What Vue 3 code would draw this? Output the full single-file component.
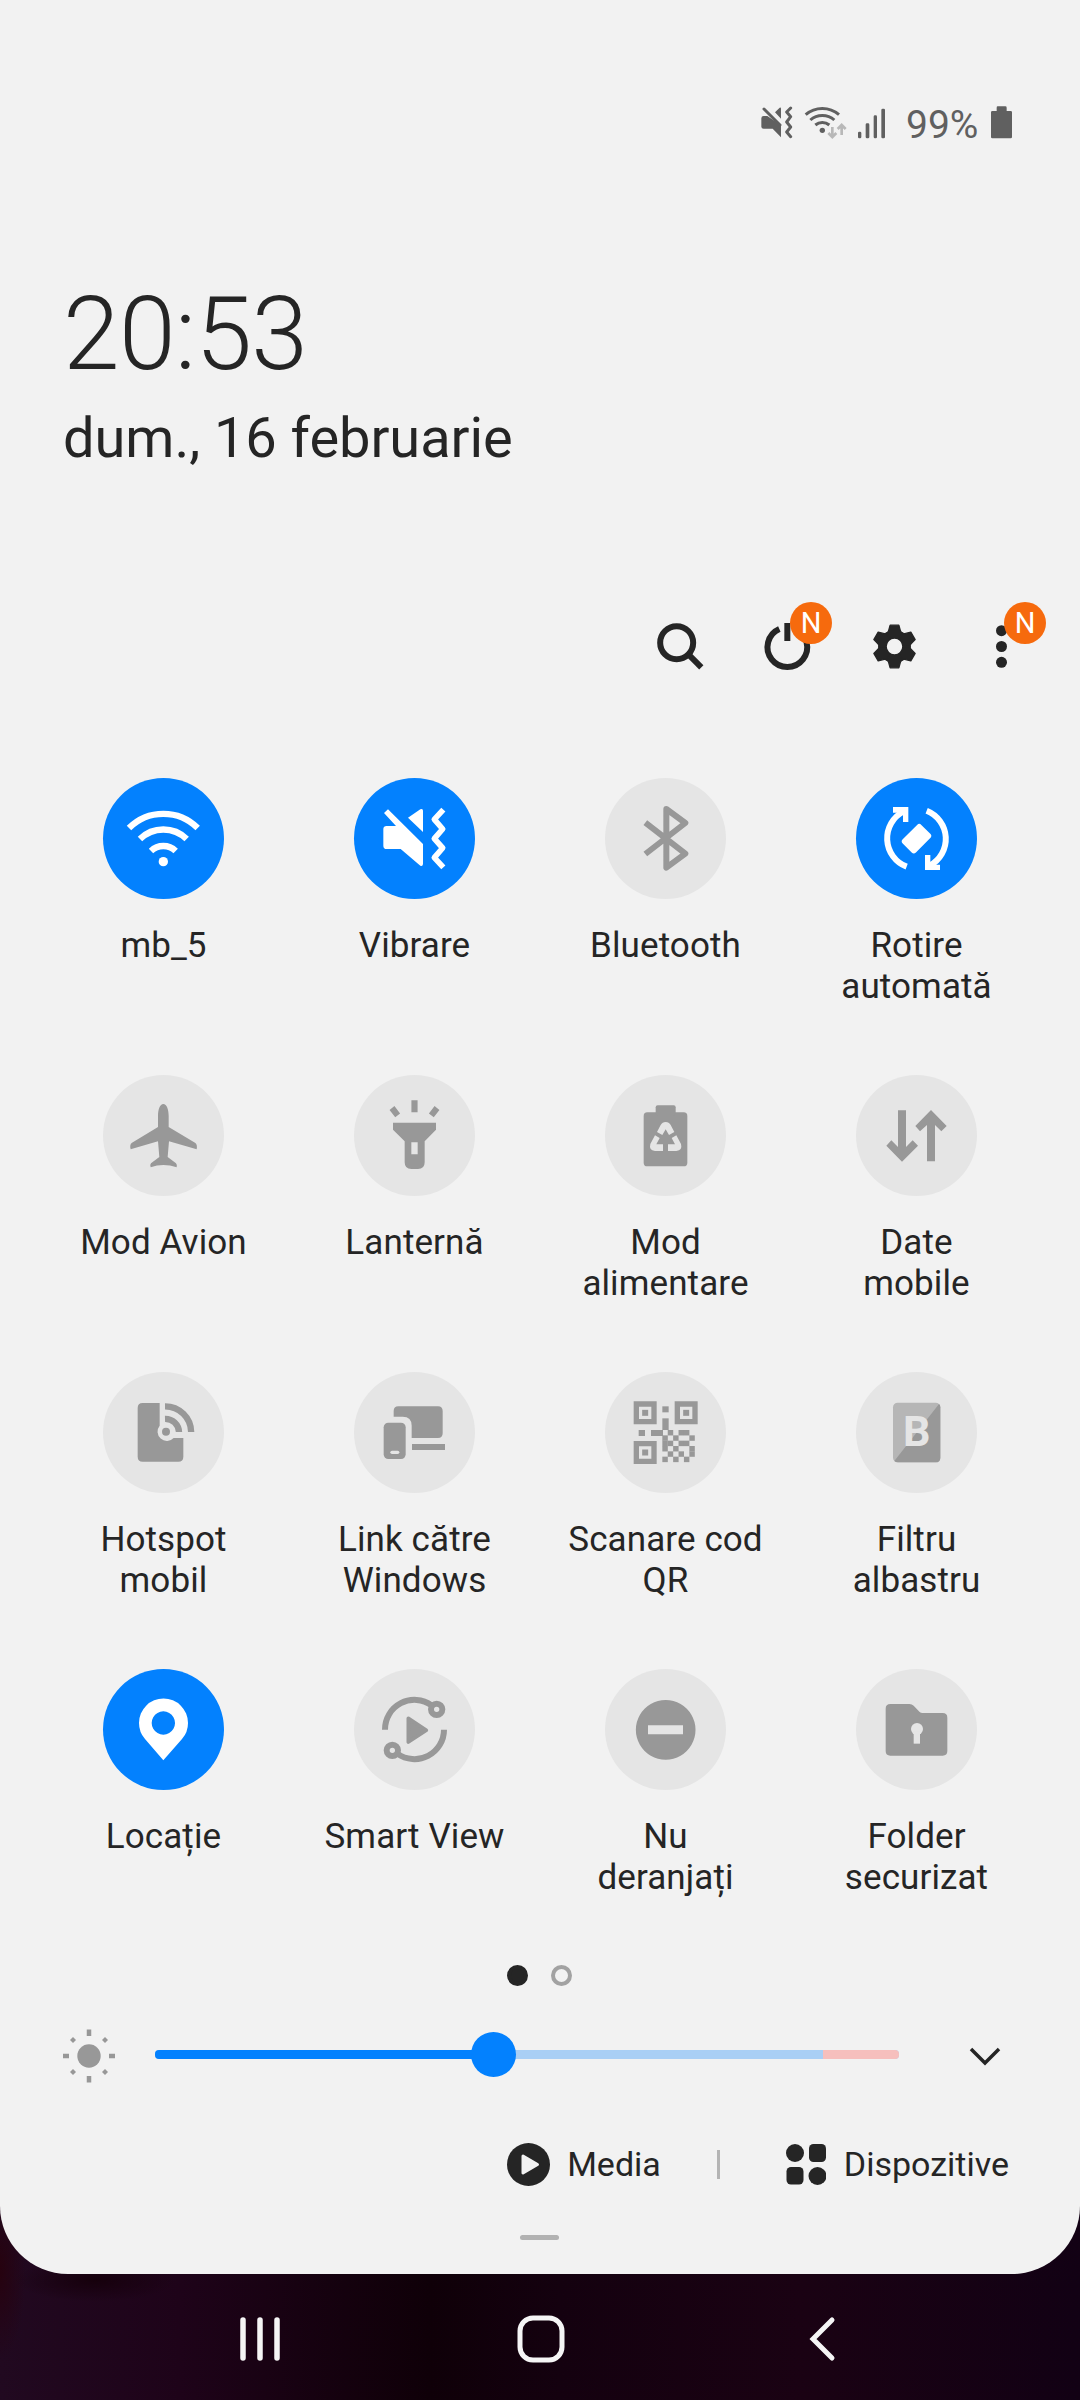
<template>
  <div class="screen">
    <main class="panel">
      <!-- status bar -->
      <div class="status-bar">
        <svg class="status-vibrate" viewBox="60 36 102 135">
          <path d="M64 85q0-7 7-7H82L123 106V142L98 116H71q-7 0-7-6zM105 67L119 53q4-2 4 3V86z" fill="currentColor" />
          <path d="M72 57L120 105M152 54L140 66L152 80L140 96L152 111L140 126L152 140" fill="none" stroke="currentColor" stroke-width="9" stroke-linecap="round" stroke-linejoin="round" />
        </svg>
        <svg class="status-wifi" viewBox="192 36 129 135">
          <g fill="none" stroke="currentColor" stroke-width="9">
            <path d="M197 74A76 76 0 0 1 297 74M211 90A54 54 0 0 1 283 90M226 105A33 33 0 0 1 268 105" />
            <path d="M277 111V139M265 129L277 141L289 129M305 135V106M293 117L305 105L317 117" stroke="#b8b8b8" stroke-width="8" />
          </g>
          <circle cx="247" cy="121" r="8" fill="currentColor" />
        </svg>
        <svg class="status-signal" viewBox="351 36 87 135" fill="currentColor">
          <rect x="354" y="125" width="10" height="20" rx="4" />
          <rect x="377" y="100" width="11" height="45" rx="4" />
          <rect x="401" y="76" width="10" height="69" rx="4" />
          <rect x="424" y="56" width="11" height="89" rx="4" />
        </svg>
        <span class="battery-text">99%</span>
        <svg class="status-battery" viewBox="750 36 69 135" fill="currentColor">
          <path d="M773 49H796q4 0 4 4V63H812q4 0 4 4V141q0 4-4 4H757q-4 0-4-4V67q0-4 4-4H770V53q0-4 3-4z" />
        </svg>
      </div>

      <div class="clock">20:53</div>
      <div class="date">dum., 16 februarie</div>

      <!-- header actions -->
      <div class="actions">
        <button class="action">
          <svg viewBox="0 0 321 321" fill="none" stroke="currentColor" stroke-width="18">
            <circle cx="149" cy="149" r="49.5" />
            <path d="M185 185L223 223" />
          </svg>
        </button>
        <button class="action">
          <svg viewBox="0 0 321 321" fill="none" stroke="currentColor" stroke-width="18">
            <path d="M136 108A59.500 59.500 0 1 0 184 108M160 90V144" />
          </svg>
          <span class="badge">N</span>
        </button>
        <button class="action">
          <svg viewBox="0 0 321 321">
            <g transform="translate(160.500 160.500)" fill="currentColor" stroke="currentColor" stroke-width="4" stroke-linejoin="round">
              <path v-for="n in 6" :key="n" :transform="`rotate(${n * 60})`" d="M-13-64H13L18-46Q20-42 24-40L0 0L-24-40Q-20-42-18-46z" />
              <circle r="21" fill="#f2f2f2" stroke="#f2f2f2" />
            </g>
          </svg>
        </button>
        <button class="action">
          <svg viewBox="0 0 321 321" fill="currentColor">
            <circle cx="160.500" cy="113" r="16.500" />
            <circle cx="160.500" cy="160.500" r="16.500" />
            <circle cx="160.500" cy="208" r="16.500" />
          </svg>
          <span class="badge">N</span>
        </button>
      </div>

      <!-- quick settings -->
      <div class="tiles">
        <div v-for="tile in tiles" :key="tile.key" class="tile" :class="{ active: tile.on }" @click="toggle(tile)">
          <div class="tile-icon">
            <svg viewBox="0 0 363 363" fill="currentColor" v-html="tile.icon"></svg>
          </div>
          <div class="tile-label">{{ tile.label }}</div>
        </div>
      </div>

      <div class="pager">
        <span v-for="n in 2" :key="n" class="dot" :class="{ current: n === page }" @click="page = n"></span>
      </div>

      <!-- brightness -->
      <div class="brightness">
        <svg class="sun" viewBox="-27 -27 54 54">
          <circle r="11.700" fill="currentColor" />
          <path d="M0-26.500V-20M0 20V26.500M-26-0H-20M20 0H26" stroke="currentColor" stroke-width="4.500" />
          <path v-for="n in 4" :key="n" :transform="`rotate(${n * 90})`" d="M16-19L19-16L16-13L13-16z" fill="currentColor" />
        </svg>
        <div class="slider">
          <div class="slider-warn"></div>
          <div class="slider-fill" :style="{ width: brightness + '%' }"></div>
          <div class="slider-thumb" :style="{ left: brightness + '%' }"></div>
        </div>
        <svg class="chevron" viewBox="0 0 32 22">
          <path d="M2 3L16 17L30 3" fill="none" stroke="currentColor" stroke-width="3.500" />
        </svg>
      </div>

      <div class="shortcuts">
        <div class="shortcut">
          <svg class="media-icon" viewBox="0 0 43 43">
            <circle cx="21.500" cy="21.500" r="21.500" fill="currentColor" />
            <path d="M16 13L30.500 21.500L16 30z" fill="#f2f2f2" stroke="#f2f2f2" stroke-width="3" stroke-linejoin="round" />
          </svg>
          <span>Media</span>
        </div>
        <span class="divider"></span>
        <div class="shortcut">
          <svg class="devices-icon" viewBox="0 0 40 41" fill="currentColor">
            <circle cx="9" cy="9" r="9" />
            <rect x="23" y="0" width="17" height="18" rx="4.500" />
            <rect x="0.500" y="23" width="17" height="17.500" rx="4.500" />
            <circle cx="31.500" cy="32" r="9" />
          </svg>
          <span>Dispozitive</span>
        </div>
      </div>

      <div class="handle"></div>
    </main>

    <nav class="nav-bar">
      <svg viewBox="0 0 48 48" stroke="currentColor" stroke-width="5.500" stroke-linecap="round">
        <path d="M7 5V43M24 5V43M41 5V43" />
      </svg>
      <svg viewBox="0 0 48 48" fill="none" stroke="currentColor" stroke-width="5">
        <rect x="3" y="3" width="42" height="42" rx="13" />
      </svg>
      <svg viewBox="0 0 48 48" fill="none" stroke="currentColor" stroke-width="5" stroke-linecap="round">
        <path d="M34 5L15 24L34 43" />
      </svg>
    </nav>
  </div>
</template>

<script setup>
import { ref } from 'vue'

const page = ref(1)
const brightness = ref(45.5)

// QR modules, 1 = dark
const qrRows = ['010110', '101001', '110110', '101001', '010101', '101010']
const qrCells = qrRows
  .map((row, y) =>
    [...row]
      .map((c, x) => (c === '1' ? `<rect x="${172 + x * 16.2}" y="${174 + y * 16}" width="16.4" height="16.4"/>` : ''))
      .join('')
  )
  .join('')
const finder = (x, y) =>
  `<path d="M${x} ${y}h69v69h-69zM${x + 16} ${y + 16}v37h37v-37z"/><rect x="${x + 25.5}" y="${y + 25.5}" width="18" height="18"/>`

const icons = {
  wifi: `<g fill="none" stroke="currentColor" stroke-width="19"><path d="M78 150A146 146 0 0 1 284 150M111 183A100 100 0 0 1 251 183M144 219A53 53 0 0 1 218 219"/></g><circle cx="181" cy="251" r="14"/>`,
  vibrate: `<path d="M90 105L102 94L207 198V258q-1 8-8 5L140 213H98q-10 0-10-10V153q0-9 10-9H126zM162 119L199 94q8-3 8 4V162z"/><path d="M268 95L241 124L266 153L241 182L266 210L241 239L268 268" fill="none" stroke="currentColor" stroke-width="17" stroke-linejoin="round"/>`,
  bluetooth: `<path d="M121 134L241 227L184 269V93L241 135L121 228" fill="none" stroke="currentColor" stroke-width="18" stroke-linejoin="round"/>`,
  rotate: `<g fill="none" stroke="currentColor" stroke-width="18"><path d="M152 266A91 91 0 0 1 143 100M212 98A91 91 0 0 1 221 263"/></g><path d="M111 87H157V132H141V104H111zM207 231H223V260H252V276H207z"/><rect x="142" y="154" width="79" height="56" rx="9" transform="rotate(-45 181.5 182)"/>`,
  plane: `<path d="M181 87C191 87 197 104 197 122V156L276 203Q284 208 281 223L198 199L194 246L219 265Q223 270 221 277Q201 270 181 270Q162 270 143 277Q140 270 144 265L169 246L165 199L83 223Q79 208 87 203L165 156V122C165 104 171 87 181 87z"/>`,
  torch: `<path fill-rule="evenodd" d="M117 143H246V164L212 199V262q0 20-20 20H172q-20 0-20-20V199L117 164zM172 202V238H191V202z"/><path d="M181.500 76V112M114 99L131 121M249 99L232 121" fill="none" stroke="currentColor" stroke-width="18.500"/>`,
  battery: `<rect x="116" y="112" width="131" height="162" rx="11"/><rect x="152" y="91" width="60" height="30" rx="6"/><g fill="#e5e5e5"><path d="M156 171L167 150Q172 141 182 141Q192 141 197 150L208 171L192 180L182 163L172 180z"/><path d="M150 181L164 189L154 208H174V228H150Q131 226 136 207z"/><path d="M214 181L200 189L210 208H189V228H214Q233 226 228 207z"/></g>`,
  data: `<path d="M126 106H150V216L170 196L186 212L138 260L91 212L106 196L126 216zM213 259H237V150L256 169L272 153L225 105L178 153L192 169L213 150z"/>`,
  hotspot: `<path d="M119 93H170V161A28 28 0 0 0 212 198H241V254q0 15-15 15H119q-15 0-15-15V108q0-15 15-15z"/><circle cx="189" cy="179" r="12"/><path d="M186 140.500A41 41 0 0 1 228 180M186 103A78 78 0 0 1 264.500 180" fill="none" stroke="currentColor" stroke-width="19"/>`,
  link: `<path d="M119 134V117q0-14 14-14H252q14 0 14 14V184q0 14-14 14H173V161q0-27-27-27z"/><rect x="89" y="152" width="66" height="109" rx="14"/><rect x="109" y="236" width="27" height="10" rx="5" fill="#e5e5e5"/><rect x="174" y="216" width="99" height="18"/>`,
  qr: `${finder(86, 88)}${finder(209, 88)}${finder(86, 207)}<rect x="172" y="103" width="19" height="18"/><rect x="172" y="139" width="19" height="35"/><rect x="101" y="174" width="19" height="18"/><rect x="138" y="174" width="36" height="18"/>${qrCells}`,
  blueFilter: `<rect x="111" y="92" width="142" height="179" rx="14" fill="#b6b6b6"/><path d="M249 96Q253 99 253 106V257q0 14-14 14H125Q119 271 115 267z"/><text x="182" y="222" text-anchor="middle" font-family="Roboto, sans-serif" font-size="129" font-weight="700" fill="#e5e5e5">B</text>`,
  location: `<path fill-rule="evenodd" d="M181 274L126 210Q108 190 108 162A73 73 0 0 1 255 162Q255 190 237 210zM181 127a35 35 0 1 0 .1 0z"/>`,
  smartView: `<g fill="none" stroke="currentColor" stroke-width="18"><path d="M93 182A88.500 88.500 0 0 1 233 109M270 182A88.500 88.500 0 0 1 130 254"/><circle cx="248" cy="121" r="17"/><circle cx="115" cy="244" r="17"/></g><path d="M163 148L217 183.500L163 219z" stroke="currentColor" stroke-width="11" stroke-linejoin="round"/>`,
  dnd: `<path fill-rule="evenodd" d="M182 93a89.500 89.500 0 1 0 .1 0zM129 169H234V196H129z"/>`,
  folder: `<path d="M103 105H160q8 0 13 5L191 129q3 3 9 3H260q14 0 14 14V246q0 14-14 14H103q-14 0-14-14V119q0-14 14-14z"/><g fill="#e5e5e5"><circle cx="183" cy="180" r="18"/><rect x="173" y="188" width="19" height="36"/></g>`,
}

const tiles = ref([
  { key: 'wifi', label: 'mb_5', on: true, icon: icons.wifi },
  { key: 'vibrate', label: 'Vibrare', on: true, icon: icons.vibrate },
  { key: 'bluetooth', label: 'Bluetooth', on: false, icon: icons.bluetooth },
  { key: 'rotate', label: 'Rotire\nautomată', on: true, icon: icons.rotate },
  { key: 'plane', label: 'Mod Avion', on: false, icon: icons.plane },
  { key: 'torch', label: 'Lanternă', on: false, icon: icons.torch },
  { key: 'battery', label: 'Mod\nalimentare', on: false, icon: icons.battery },
  { key: 'data', label: 'Date\nmobile', on: false, icon: icons.data },
  { key: 'hotspot', label: 'Hotspot\nmobil', on: false, icon: icons.hotspot },
  { key: 'link', label: 'Link către\nWindows', on: false, icon: icons.link },
  { key: 'qr', label: 'Scanare cod\nQR', on: false, icon: icons.qr },
  { key: 'blueFilter', label: 'Filtru\nalbastru', on: false, icon: icons.blueFilter },
  { key: 'location', label: 'Locație', on: true, icon: icons.location },
  { key: 'smartView', label: 'Smart View', on: false, icon: icons.smartView },
  { key: 'dnd', label: 'Nu\nderanjați', on: false, icon: icons.dnd },
  { key: 'folder', label: 'Folder\nsecurizat', on: false, icon: icons.folder },
])

const toggle = (tile) => {
  tile.on = !tile.on
}
</script>

<style>
body {
  margin: 0;
}
</style>

<style scoped>
.screen {
  width: 1080px;
  height: 2400px;
  display: flex;
  flex-direction: column;
  overflow: hidden;
  font-family: Roboto, sans-serif;
  color: #252525;
  background:
    radial-gradient(ellipse 26px 90px at 0 2270px, #26020f, transparent),
    radial-gradient(ellipse 80px 22px at 95px 2280px, #16000c, transparent),
    linear-gradient(90deg, #210920 0, #1e0319 180px, #0f0008 430px, #14010f 560px, #1a0213 800px, #120114 1080px);
}
.panel {
  box-sizing: border-box;
  height: 2274px;
  padding-top: 102px;
  background: #f2f2f2;
  border-radius: 0 0 68px 68px;
}
svg {
  display: block;
}

.status-bar {
  display: flex;
  justify-content: flex-end;
  height: 45px;
  padding-right: 67px;
  color: #606060;
}
.status-bar svg {
  height: 45px;
}
.status-vibrate {
  width: 34px;
  margin-right: 10px;
}
.status-wifi {
  width: 43px;
  margin-right: 10px;
}
.status-signal {
  width: 29px;
  margin-right: 20px;
}
.status-battery {
  width: 23px;
}
.battery-text {
  width: 84px;
  font-size: 39px;
  line-height: 47px;
}

.clock {
  margin: 127px 0 0 63px;
  font-size: 102px;
  font-weight: 300;
  line-height: 120px;
  letter-spacing: -0.7px;
}
.date {
  margin: 11px 0 0 63px;
  font-size: 56px;
  line-height: 66px;
  letter-spacing: -0.05px;
}

.actions {
  display: flex;
  justify-content: flex-end;
  margin-top: 122px;
  padding-right: 25px;
}
.action {
  position: relative;
  width: 107px;
  height: 107px;
  padding: 0;
  border: none;
  background: none;
  color: inherit;
  font-family: inherit;
}
.badge {
  position: absolute;
  left: 56px;
  top: 9px;
  width: 42px;
  height: 42px;
  border-radius: 50%;
  background: #f66a0d;
  color: #fff;
  font-size: 29px;
  line-height: 43px;
  text-align: center;
}

.tiles {
  display: grid;
  grid-template-columns: repeat(4, 251px);
  grid-auto-rows: 297px;
  height: 1187px;
  margin: 78px 0 0 38px;
}
.tile {
  display: flex;
  flex-direction: column;
  align-items: center;
  cursor: pointer;
}
.tile-icon {
  width: 121px;
  height: 121px;
  border-radius: 50%;
  background: #e5e5e5;
  color: #989898;
}
.tile.active .tile-icon {
  background: #0381fe;
  color: #fff;
}
.tile-label {
  width: 220px;
  margin-top: 26px;
  font-size: 35px;
  line-height: 41px;
  letter-spacing: 0.1px;
  text-align: center;
  white-space: pre-line;
}

.pager {
  display: flex;
  justify-content: center;
  gap: 23px;
  height: 21px;
  padding-right: 2px;
}
.dot {
  box-sizing: border-box;
  width: 21px;
  height: 21px;
  border: 4px solid #a2a2a2;
  border-radius: 50%;
}
.dot.current {
  border-color: #252525;
  background: #252525;
}

.brightness {
  display: flex;
  align-items: center;
  height: 60px;
  margin-top: 38px;
  padding-left: 62px;
}
.sun {
  width: 54px;
  height: 54px;
  margin-top: 3px;
  color: #989898;
}
.slider {
  position: relative;
  width: 744px;
  height: 9px;
  margin-left: 39px;
  border-radius: 4px;
  background: #a9cff5;
}
.slider-warn {
  width: 76px;
  height: 9px;
  margin-left: auto;
  border-radius: 0 4px 4px 0;
  background: #f6bfbd;
}
.slider-fill {
  position: absolute;
  left: 0;
  top: 0;
  height: 9px;
  border-radius: 4px;
  background: #0381fe;
}
.slider-thumb {
  position: absolute;
  top: -18px;
  width: 45px;
  height: 45px;
  margin-left: -22.5px;
  border-radius: 50%;
  background: #0381fe;
}
.chevron {
  width: 32px;
  height: 22px;
  margin: 5px 0 0 70px;
}

.shortcuts {
  display: flex;
  justify-content: flex-end;
  align-items: center;
  height: 50px;
  margin-top: 55px;
  padding-right: 71px;
}
.shortcut {
  display: flex;
  align-items: center;
  font-size: 34px;
  line-height: 50px;
}
.media-icon {
  width: 43px;
  height: 43px;
  margin-right: 17px;
}
.devices-icon {
  width: 40px;
  height: 41px;
  margin-right: 18px;
}
.divider {
  width: 3px;
  height: 29px;
  margin: 0 66px 0 56px;
  background: #b4b4b4;
}
.handle {
  width: 39px;
  height: 5px;
  margin: 46px 0 0 520px;
  border-radius: 3px;
  background: #b2b2b2;
}

.nav-bar {
  display: flex;
  justify-content: center;
  gap: 233px;
  padding: 41px 0 0 2px;
  color: #f5f5f5;
}
.nav-bar svg {
  width: 48px;
  height: 48px;
}
</style>
